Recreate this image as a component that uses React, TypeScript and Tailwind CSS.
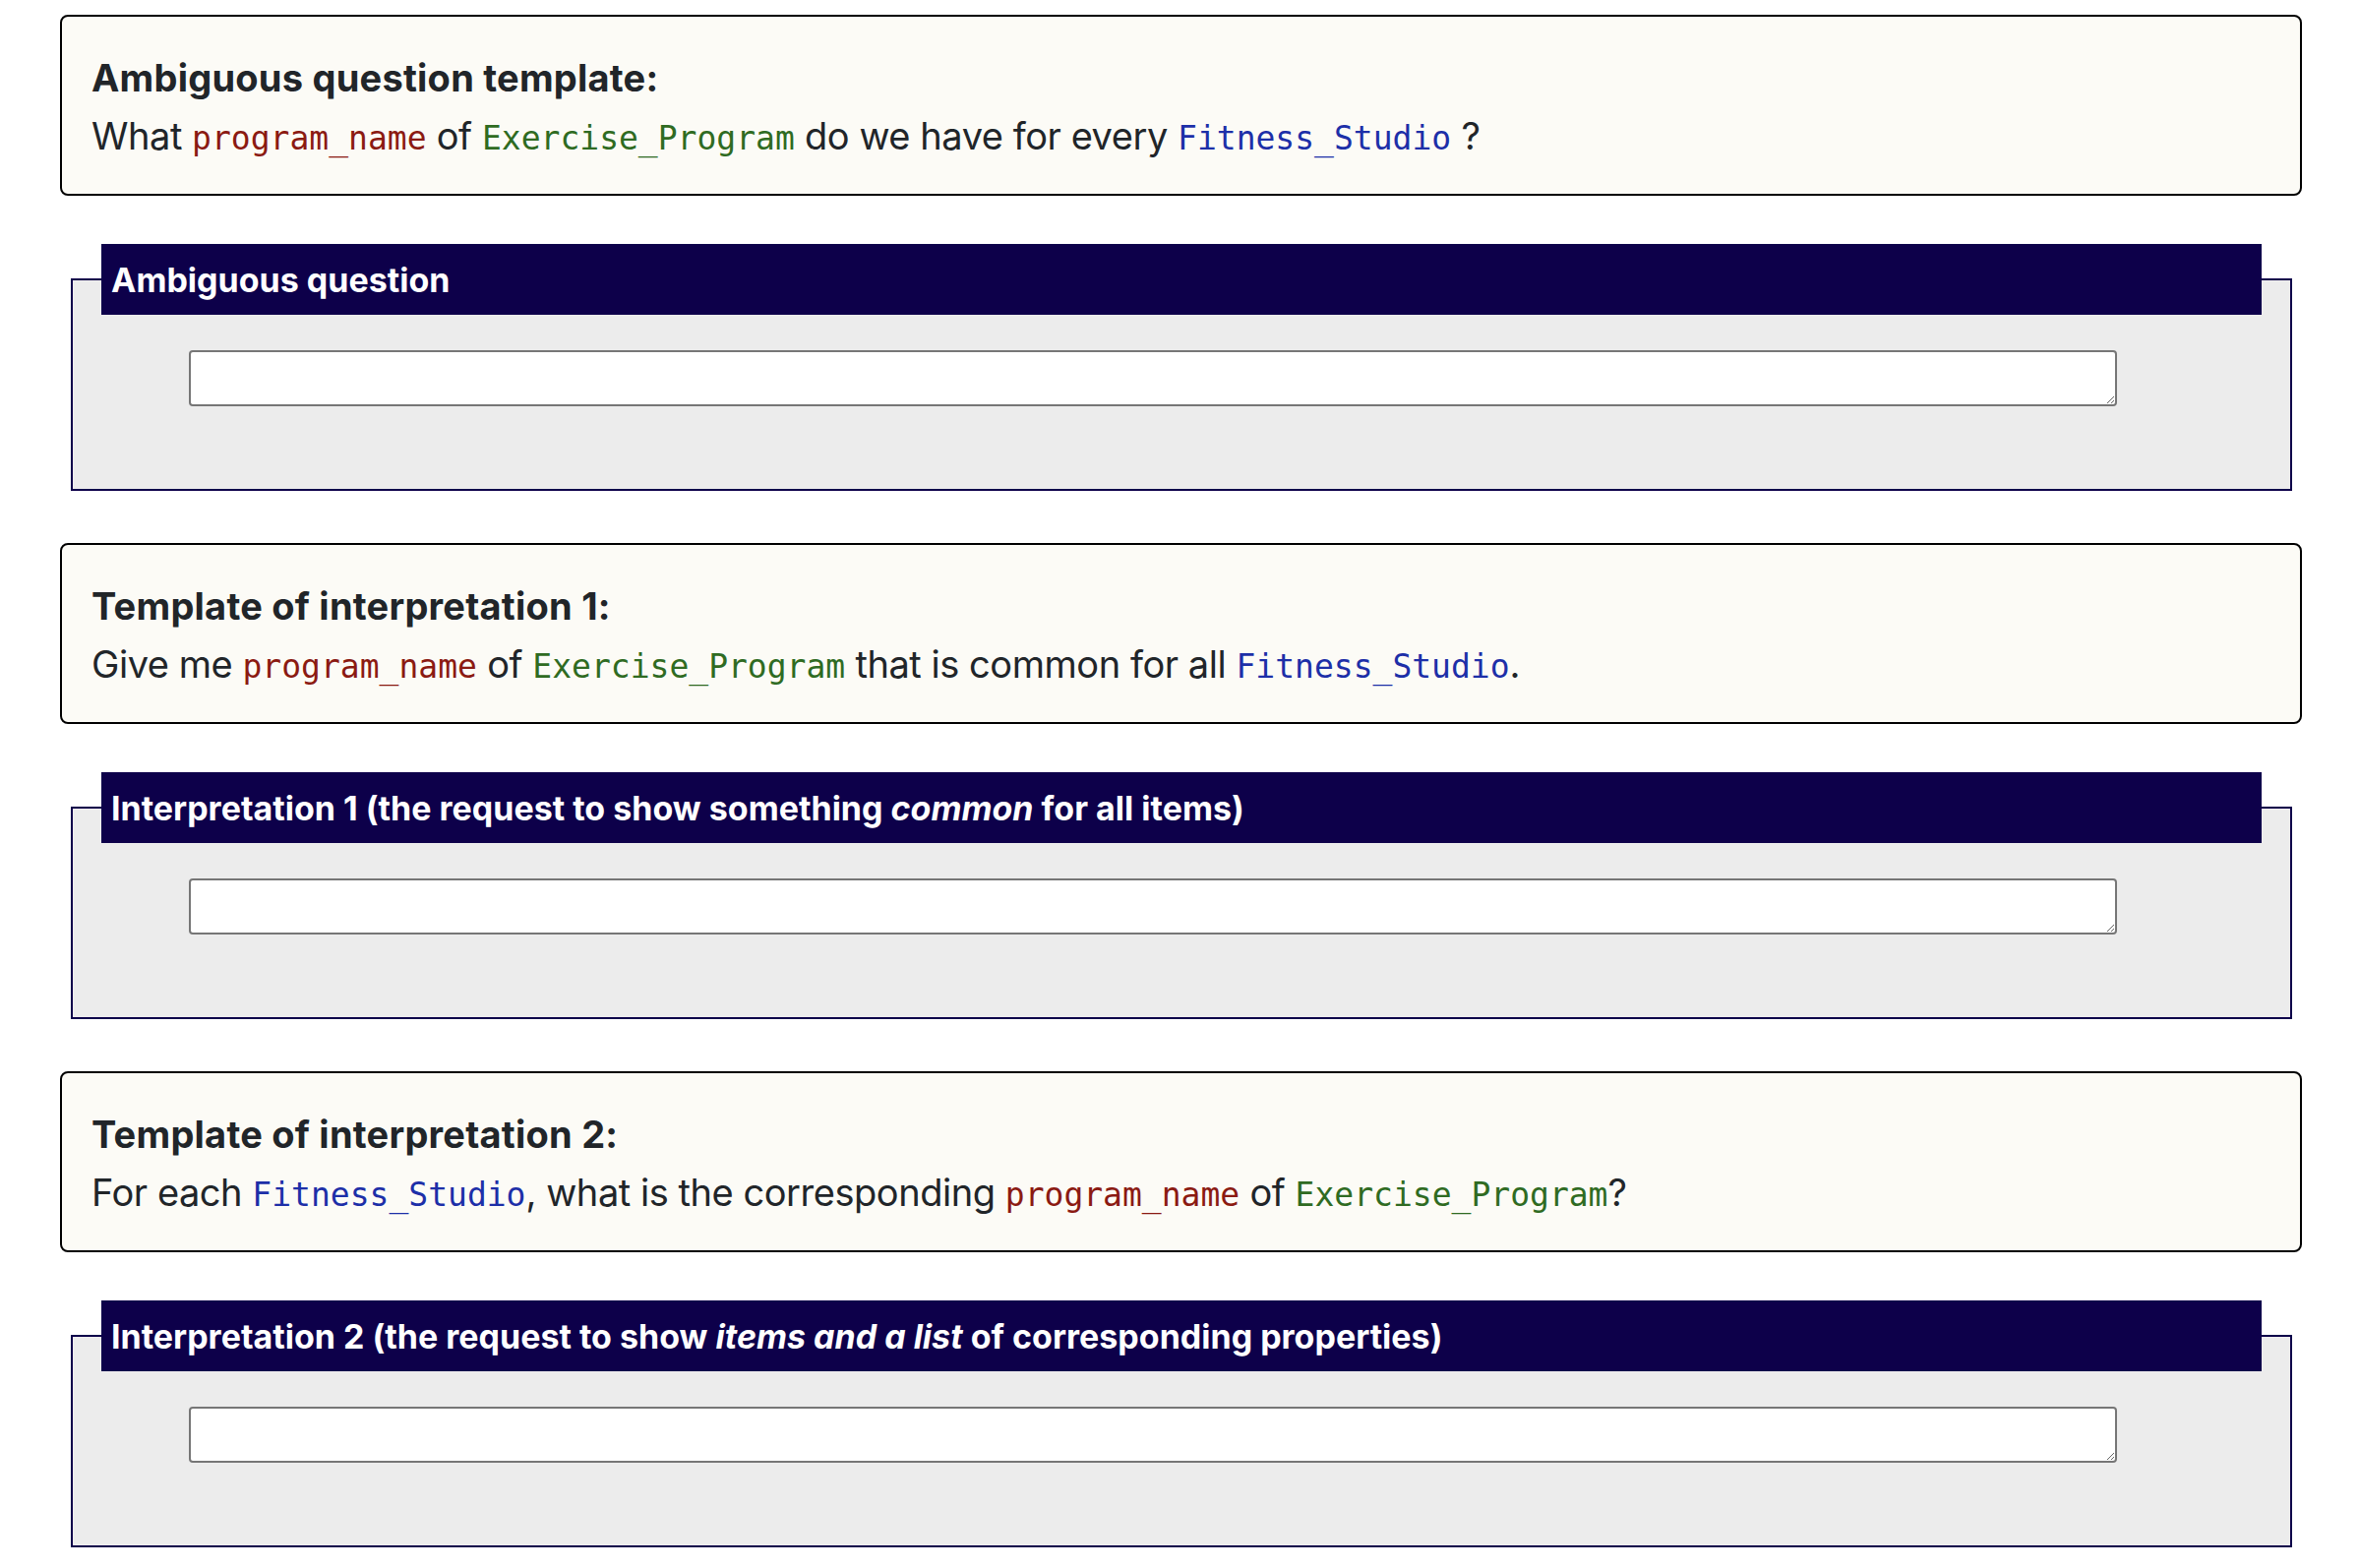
import React from 'react';

const sans = "font-['Inter','Liberation_Sans',sans-serif]";

function Code({ color, children }: { color: 'red' | 'green' | 'blue'; children: React.ReactNode }) {
  const cls =
    color === 'red' ? 'text-[#8b1a12]' : color === 'green' ? 'text-[#2f6b22]' : 'text-[#1d2fa8]';
  return (
    <code className={`font-['DejaVu_Sans_Mono','Liberation_Mono',monospace] text-[33px] tracking-normal ${cls}`}>
      {children}
    </code>
  );
}

function TemplateBox({ title, children }: { title: string; children: React.ReactNode }) {
  return (
    <div className="border-2 border-black rounded-[8px] bg-[#fcfbf6] px-[30px] pt-[33px] pb-[27px] text-[#212529] text-[38px] leading-[59px]">
      <div className="font-bold tracking-[0.006em]">{title}</div>
      <div className="tracking-[-0.012em]">{children}</div>
    </div>
  );
}

function AnswerField({ legend }: { legend: React.ReactNode }) {
  return (
    <fieldset className="ml-[11px] mr-[10px] border-2 border-[#0d004a] bg-[#ececec] px-[29px] pb-[84px]">
      <legend className="w-full h-[72px] bg-[#0d004a] text-white font-bold text-[34px] px-[10px] flex items-center">
        <span>{legend}</span>
      </legend>
      <textarea
        rows={1}
        className="block mt-[36px] ml-[89px] w-[1960px] h-[57px] bg-white border-2 border-[#767676] rounded-[4px] outline-none"
      />
    </fieldset>
  );
}

export default function App() {
  return (
    <div className={`${sans} bg-white min-h-[1594px] pl-[61px] pr-[58px] pt-[15px]`}>
      <TemplateBox title="Ambiguous question template:">
        What <Code color="red">program_name</Code> of <Code color="green">Exercise_Program</Code> do we have for every{' '}
        <Code color="blue">Fitness_Studio</Code> ?
      </TemplateBox>

      <div className="mt-[49px]">
        <AnswerField legend="Ambiguous question" />
      </div>

      <div className="mt-[53px]">
        <TemplateBox title="Template of interpretation 1:">
          Give me <Code color="red">program_name</Code> of <Code color="green">Exercise_Program</Code> that is common for
          all <Code color="blue">Fitness_Studio</Code>.
        </TemplateBox>
      </div>

      <div className="mt-[49px]">
        <AnswerField
          legend={
            <>
              Interpretation 1 (the request to show something <i>common</i> for all items)
            </>
          }
        />
      </div>

      <div className="mt-[53px]">
        <TemplateBox title="Template of interpretation 2:">
          For each <Code color="blue">Fitness_Studio</Code>, what is the corresponding <Code color="red">program_name</Code>{' '}
          of <Code color="green">Exercise_Program</Code>?
        </TemplateBox>
      </div>

      <div className="mt-[49px]">
        <AnswerField
          legend={
            <>
              Interpretation 2 (the request to show <i>items and a list</i> of corresponding properties)
            </>
          }
        />
      </div>
    </div>
  );
}
